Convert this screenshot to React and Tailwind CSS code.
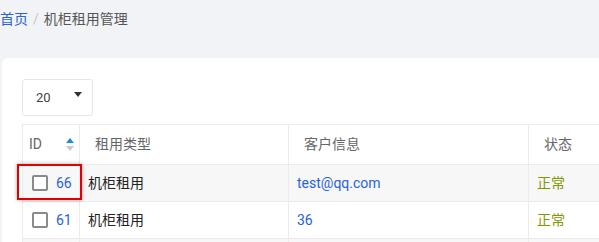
import React from "react";

const ROWS = [
  { id: 66, type: "机柜租用", customer: "test@qq.com", status: "正常" },
  { id: 61, type: "机柜租用", customer: "36", status: "正常" },
  { id: 58, type: "", customer: "", status: "" },
];

function SortIcon() {
  return (
    <svg width="8" height="13" viewBox="0 0 8 13" className="inline-block">
      <path d="M4 0 L8 5 L0 5 Z" fill="#1e88e5" />
      <path d="M0 8 L8 8 L4 13 Z" fill="#c8c8c8" />
    </svg>
  );
}

export default function App() {
  return (
    <div
      className="w-[599px] h-[242px] overflow-hidden bg-[#f2f3f7] text-[14px]"
      style={{ fontFamily: 'Roboto, "Noto Sans CJK SC", sans-serif' }}
    >
      {/* Breadcrumb */}
      <div className="h-[58px] flex items-start pt-[9px] text-[14px] leading-[20px]">
        <span className="text-[#2a62d8]">首页</span>
        <span className="text-[#c8c8c8] mx-[5px]">/</span>
        <span className="text-[#555]">机柜租用管理</span>
      </div>

      {/* Card */}
      <div className="ml-[2px] bg-white rounded-tl-[6px] pl-[20px] pt-[21px] h-[200px]">
        <div className="w-[71px] h-[37px] border border-[#e6e6e6] rounded-[3px] flex items-center justify-between pl-[13px] pr-[10px]">
          <span className="text-[13px] text-[#444]">20</span>
          <svg width="8" height="5" viewBox="0 0 8 5" className="mb-[6px]">
            <path d="M0 0 L8 0 L4 5 Z" fill="#333" />
          </svg>
        </div>

        <div className="relative mt-[8px]">
          <table className="table-fixed border-collapse w-[700px] text-[14px]">
            <colgroup>
              <col className="w-[57px]" />
              <col className="w-[209px]" />
              <col className="w-[240px]" />
              <col className="w-[194px]" />
            </colgroup>
            <thead>
              <tr className="h-[40px]">
                <th className="border border-[#ebebeb] font-normal text-left text-[#666] pl-[6px] pr-[5px]">
                  <div className="flex items-center justify-between">
                    <span>ID</span>
                    <SortIcon />
                  </div>
                </th>
                <th className="border border-[#ebebeb] font-normal text-left text-[#666] pl-[15px]">租用类型</th>
                <th className="border border-[#ebebeb] font-normal text-left text-[#666] pl-[15px]">客户信息</th>
                <th className="border border-[#ebebeb] font-normal text-left text-[#666] pl-[15px]">状态</th>
              </tr>
            </thead>
            <tbody>
              {ROWS.map((r, i) => (
                <tr key={r.id} className={i % 2 === 0 ? "h-[37px] bg-[#f7f7f7]" : "h-[37px] bg-white"}>
                  <td className="border border-[#ebebeb] pl-[9px]">
                    {r.type && (
                      <div className="flex items-center gap-[8px]">
                        <span className="w-[16px] h-[16px] border-2 border-[#8a8a8a] rounded-[2px] bg-white" />
                        <span className="text-[#2a62d8]">{r.id}</span>
                      </div>
                    )}
                  </td>
                  <td className="border border-[#ebebeb] pl-[8px] text-[#222]">{r.type}</td>
                  <td className="border border-[#ebebeb] pl-[8px] text-[#2a62d8]">{r.customer}</td>
                  <td className="border border-[#ebebeb] pl-[8px] text-[#7f9a00]">{r.status}</td>
                </tr>
              ))}
            </tbody>
          </table>

          {/* highlight box */}
          <div className="absolute left-[-5px] top-[40px] w-[65px] h-[36px] border-2 border-[#e00000] shadow-[0_0_4px_rgba(0,0,0,0.35)]" />
        </div>
      </div>
    </div>
  );
}
